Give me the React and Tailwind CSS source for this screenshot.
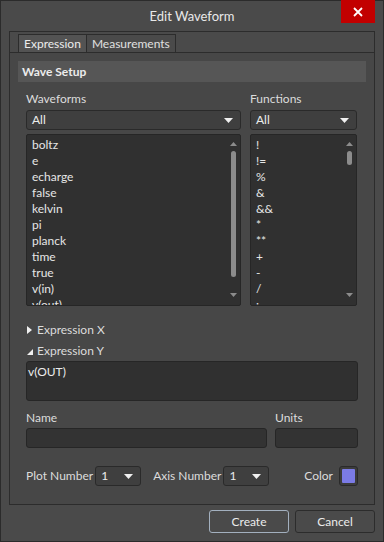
import React from "react";

const font = { fontFamily: 'Lato, "Open Sans", sans-serif' };

function Caret({ className = "" }) {
  return (
    <svg width="9" height="5" viewBox="0 0 9 5" className={className}>
      <path d="M0 0 L9 0 L4.5 5 Z" fill="#f0f0f0" />
    </svg>
  );
}

function Select({ value, className = "" }) {
  return (
    <div
      className={`h-[20px] flex items-center justify-between pl-[5px] pr-[7px] bg-[#3f3f3f] border border-[#2a2a2a] rounded-[3px] text-[#ececec] text-[12px] ${className}`}
    >
      <span>{value}</span>
      <Caret />
    </div>
  );
}

function ListBox({ items, thumbH, className = "" }) {
  return (
    <div className={`relative h-[172px] bg-[#303030] border border-[#262626] rounded-[2px] overflow-hidden ${className}`}>
      <div className="pt-[2px] pl-[5px] flex flex-col">
        {items.map((t) => (
          <div key={t} className="h-[16px] leading-[16px] text-[12px] text-[#e6e6e6]">
            {t}
          </div>
        ))}
      </div>
      <div className="absolute right-[3px] top-0 bottom-0 w-[7px] flex flex-col items-center">
        <svg width="7" height="4" viewBox="0 0 7 4" className="mt-[7px]">
          <path d="M0 4 L7 4 L3.5 0 Z" fill="#8c8c8c" />
        </svg>
        <div className="mt-[5px] w-[5px] rounded-[3px] bg-[#8c8c8c]" style={{ height: thumbH }} />
        <div className="flex-1" />
        <svg width="7" height="4" viewBox="0 0 7 4" className="mb-[8px]">
          <path d="M0 0 L7 0 L3.5 4 Z" fill="#8c8c8c" />
        </svg>
      </div>
    </div>
  );
}

export default function App() {
  const waveforms = ["boltz", "e", "echarge", "false", "kelvin", "pi", "planck", "time", "true", "v(in)", "v(out)"];
  const functions = ["!", "!=", "%", "&", "&&", "*", "**", "+", "-", "/", ":"];
  return (
    <div
      className="w-[384px] h-[542px] bg-[#4a4a4a] border border-[#2b2b2b] flex flex-col text-[#e0e0e0]"
      style={font}
    >
      {/* Title bar */}
      <div className="relative h-[30px] flex items-center justify-center">
        <span className="text-[13px] text-[#e8e8e8] mt-[1px]">Edit Waveform</span>
        <div className="absolute right-[8px] top-[-1px] w-[34px] h-[23px] bg-[#c20000] flex items-center justify-center">
          <svg width="10" height="10" viewBox="0 0 10 10">
            <path d="M1 1 L9 9 M9 1 L1 9" stroke="#ffffff" strokeWidth="1.8" />
          </svg>
        </div>
      </div>

      {/* Main box */}
      <div className="mx-[8px] border border-[#2c2c2c] flex flex-col bg-[#474747]">
        {/* Tabs */}
        <div className="h-[20px] flex items-end pl-[8px] bg-[#4a4a4a]">
          <div className="h-[18px] px-[5px] flex items-center bg-[#535353] border border-b-0 border-[#2c2c2c] text-[12px] text-[#ececec]">
            Expression
          </div>
          <div className="h-[18px] px-[5px] flex items-center bg-[#4a4a4a] border border-l-0 border-b-0 border-[#2c2c2c] text-[12px] text-[#e0e0e0]">
            Measurements
          </div>
        </div>
        <div className="border-t border-[#2c2c2c] flex flex-col pb-[18px]">
          {/* Header */}
          <div className="mx-[8px] mt-[8px] h-[21px] bg-[#565656] flex items-center pl-[4px] text-[12px] font-bold text-[#ececec]">
            Wave Setup
          </div>

          <div className="px-[16px] flex flex-col">
            <div className="flex gap-[9px] mt-[9px]">
              <div className="w-[215px] flex flex-col">
                <div className="h-[16px] leading-[16px] text-[12px] text-[#dcdcdc]">Waveforms</div>
                <Select value="All" className="mt-[3px]" />
                <ListBox items={waveforms} thumbH={126} className="mt-[4px]" />
              </div>
              <div className="w-[107px] flex flex-col">
                <div className="h-[16px] leading-[16px] text-[12px] text-[#dcdcdc]">Functions</div>
                <Select value="All" className="mt-[3px]" />
                <ListBox items={functions} thumbH={14} className="mt-[4px]" />
              </div>
            </div>

            {/* Expression X */}
            <div className="mt-[16px] h-[16px] flex items-center gap-[4px] text-[12px] text-[#dcdcdc]">
              <svg width="5" height="8" viewBox="0 0 5 8" className="ml-[1px]">
                <path d="M0 0 L5 4 L0 8 Z" fill="#f0f0f0" />
              </svg>
              <span className="ml-[1px]">Expression X</span>
            </div>
            <div className="mt-[5px] h-[16px] flex items-center gap-[4px] text-[12px] text-[#dcdcdc]">
              <svg width="6" height="6" viewBox="0 0 6 6" className="ml-[1px] mt-[2px]">
                <path d="M6 0 L6 6 L0 6 Z" fill="#f0f0f0" />
              </svg>
              <span>Expression Y</span>
            </div>
            <div className="mt-[2px] h-[40px] bg-[#303030] border border-[#262626] rounded-[3px] px-[1px] pt-[2px] text-[12px] text-[#ececec] leading-[16px]">
              v(OUT)
            </div>

            {/* Name / Units */}
            <div className="flex gap-[8px] mt-[9px]">
              <div className="w-[241px] flex flex-col">
                <div className="h-[16px] leading-[16px] text-[12px] text-[#dcdcdc]">Name</div>
                <div className="mt-[2px] h-[20px] bg-[#333333] border border-[#262626] rounded-[3px]" />
              </div>
              <div className="flex-1 flex flex-col">
                <div className="h-[16px] leading-[16px] text-[12px] text-[#dcdcdc]">Units</div>
                <div className="mt-[2px] h-[20px] bg-[#333333] border border-[#262626] rounded-[3px]" />
              </div>
            </div>

            {/* Plot row */}
            <div className="mt-[18px] h-[20px] flex items-center text-[12px] text-[#dcdcdc]">
              <span>Plot Number</span>
              <Select value="1" className="ml-[2px] w-[46px]" />
              <span className="ml-[12px]">Axis Number</span>
              <Select value="1" className="ml-[2px] w-[46px]" />
              <div className="flex-1" />
              <span>Color</span>
              <div className="ml-[6px] w-[19px] h-[20px] border border-[#2a2a2a] rounded-[3px] bg-[#3c3c3c] flex items-center justify-center">
                <div className="w-[13px] h-[14px] bg-[#7b7be6] rounded-[1px]" />
              </div>
            </div>
          </div>
        </div>
      </div>

      {/* Buttons */}
      <div className="mt-[5px] flex justify-end gap-[6px] pr-[8px]">
        <div className="w-[80px] h-[23px] border border-[#a3b0bf] rounded-[3px] flex items-center justify-center text-[12px] text-[#ececec]">
          Create
        </div>
        <div className="w-[80px] h-[23px] border border-[#2c2c2c] rounded-[3px] flex items-center justify-center text-[12px] text-[#ececec]">
          Cancel
        </div>
      </div>
    </div>
  );
}
